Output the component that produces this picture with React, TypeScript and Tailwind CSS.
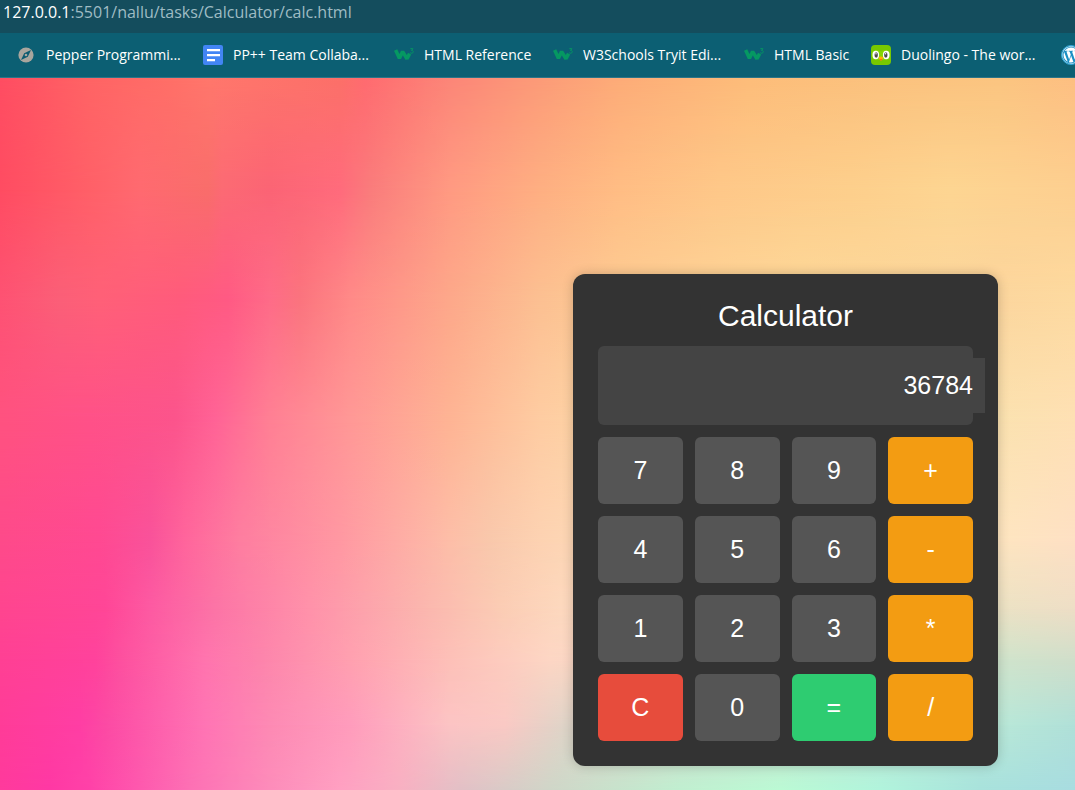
import { useState } from "react";
import type { ReactNode } from "react";
import { FaWordpress } from "react-icons/fa";

type Stop = [color: string, x: number];

// Each band holds the backdrop's colours at one height; x runs from 0 to 1075, y from 0 to 712.
const BANDS: { y: number; stops: Stop[] }[] = [
  { y: 0, stops: [["#ff4d62", 0], ["#ff6465", 90], ["#ff7068", 175], ["#ff776c", 210], ["#fc7069", 340], ["#ff6b70", 365], ["#fc8678", 450], ["#fc9b78", 540], ["#fdac78", 620], ["#fdbd7a", 750], ["#fbc27e", 880], ["#fbc580", 1000], ["#fdbf82", 1075]] },
  { y: 112, stops: [["#ff4c62", 0], ["#ff6068", 90], ["#ff6a70", 140], ["#f96d6b", 208], ["#fc6a74", 222], ["#fb6475", 270], ["#ff6b7c", 340], ["#fa7c7c", 370], ["#ff9a82", 450], ["#feaf82", 540], ["#ffbd84", 620], ["#fec889", 720], ["#fdcf8c", 850], ["#fdd592", 950], ["#fdcf90", 1075]] },
  { y: 222, stops: [["#fe5273", 0], ["#fb5f78", 60], ["#ff6078", 100], ["#ff5b7c", 180], ["#ff5a84", 228], ["#fe6c88", 270], ["#fb747e", 300], ["#ff8a88", 350], ["#fda88a", 450], ["#fcc092", 540], ["#fdcd94", 620], ["#fdd99a", 800], ["#fcd69e", 1000], ["#fddaa0", 1075]] },
  { y: 342, stops: [["#ff5280", 0], ["#ff5188", 90], ["#fc548c", 175], ["#ff6396", 215], ["#ff8094", 270], ["#ff9896", 350], ["#feb494", 450], ["#fecca2", 540], ["#fdd8a6", 620], ["#fbe2b0", 1000], ["#fee0b4", 1075]] },
  { y: 462, stops: [["#fe4a8a", 0], ["#ff4992", 100], ["#f9529a", 150], ["#ff659c", 185], ["#fe7ea0", 240], ["#ff98a2", 340], ["#fdbea8", 450], ["#f9c8ac", 490], ["#fdd2b2", 540], ["#fddcb8", 620], ["#fee5c0", 1000], ["#fee0c4", 1075]] },
  { y: 530, stops: [["#ff458f", 0], ["#ff4697", 105], ["#fd5aa2", 150], ["#fc74a6", 215], ["#ff92aa", 310], ["#fbb5ae", 420], ["#fbccb4", 500], ["#fdd8be", 560], ["#ece2c4", 1000], ["#eedec6", 1075]] },
  { y: 582, stops: [["#ff4094", 0], ["#ff429c", 95], ["#fd509f", 120], ["#ff74ae", 205], ["#fd84ac", 260], ["#ffa0b0", 350], ["#fdc0b8", 450], ["#fdd6c4", 550], ["#d0e4cc", 1000], ["#d0deca", 1075]] },
  { y: 647, stops: [["#ff3c98", 0], ["#ff3ea4", 80], ["#fc4aa4", 105], ["#ff74b4", 205], ["#fd8ab4", 270], ["#ff9cbc", 350], ["#fcc4c4", 450], ["#fac9c4", 505], ["#dfd4c8", 565], ["#b9e8d8", 1000], ["#b0e0d8", 1075]] },
  { y: 712, stops: [["#ff3a9c", 0], ["#ff38a4", 50], ["#ff42a8", 90], ["#fd70b4", 190], ["#fd8cba", 270], ["#ffa0c2", 340], ["#f8b0c2", 400], ["#e2c0c6", 460], ["#cfd6c8", 550], ["#c0efd0", 680], ["#bafad4", 780], ["#b0f4dc", 880], ["#a8e2dc", 980], ["#a8dce0", 1075]] },
];

const pct = (value: number, total: number) => `${((value / total) * 100).toFixed(2)}%`;

function Backdrop() {
  return (
    <div aria-hidden="true" className="absolute inset-0">
      {BANDS.map((band, i) => {
        const colors = band.stops.map(([color, x]) => `${color} ${pct(x, 1075)}`).join(", ");
        const mask =
          i === 0
            ? undefined
            : `linear-gradient(to bottom, transparent ${pct(BANDS[i - 1].y, 712)}, black ${pct(band.y, 712)})`;
        return (
          <div
            key={band.y}
            className="absolute inset-0"
            style={{ backgroundImage: `linear-gradient(to right, ${colors})`, maskImage: mask }}
          />
        );
      })}
    </div>
  );
}

function CompassIcon() {
  return (
    <svg viewBox="0 0 20 20" className="size-5">
      <circle cx="10" cy="10" r="7.6" fill="#a9a59d" />
      <path d="M15 5 L11.8 11.8 L5 15 L8.2 8.2 Z" fill="#0b5a70" />
      <circle cx="10" cy="10" r="1.3" fill="#a9a59d" />
    </svg>
  );
}

function DocsIcon() {
  return (
    <svg viewBox="0 0 20 20" className="size-5">
      <rect width="20" height="20" rx="2" fill="#4285f4" />
      <path d="M4 4h13v2.3H4zM4 9h13v2.3H4zM4 14h8v2.3H4z" fill="#fff" />
    </svg>
  );
}

function SchoolsIcon() {
  return (
    <svg viewBox="0 0 20 20" className="size-5">
      <path
        d="M1.6 5 L5.4 13.2 L8.6 6.6 L13 13.8 L15.6 8.6"
        fill="none"
        stroke="#059862"
        strokeWidth="3.6"
        strokeLinejoin="bevel"
      />
      <path
        d="M16.4 3.7h2.5L17.5 5.4c1.200 0 1.700.6 1.700 1.300 0 .9-.7 1.500-1.600 1.500-.6 0-1-.2-1.400-.6"
        fill="none"
        stroke="#059862"
        strokeWidth="1"
      />
    </svg>
  );
}

function OwlIcon() {
  return (
    <svg viewBox="0 0 20 20" className="size-5">
      <rect width="20" height="20" rx="4" fill="#78c800" />
      <path d="M1 7.5C2 4.5 7 4 10 6.5 13 4 18 4.5 19 7.5V12c-1 3.5-6.5 4-9 1.5C7.5 16 2 15.5 1 12z" fill="#84d600" />
      <ellipse cx="4.8" cy="10" rx="3.3" ry="4.2" fill="#fff" />
      <ellipse cx="15.2" cy="10" rx="3.3" ry="4.2" fill="#fff" />
      <ellipse cx="5.2" cy="10" rx="1.7" ry="2.7" fill="#4b4b4b" />
      <ellipse cx="14.8" cy="10" rx="1.7" ry="2.7" fill="#4b4b4b" />
      <circle cx="5" cy="8.8" r="0.7" fill="#fff" />
      <circle cx="14.6" cy="8.8" r="0.7" fill="#fff" />
      <path d="M7.7 12.2c1-1 3.6-1 4.6 0-.3 1.8-1.4 3.2-2.3 3.2s-2-1.4-2.3-3.2z" fill="#ffb100" />
      <path d="M8.5 13.9h3c-.3 1-.9 1.5-1.5 1.5s-1.2-.5-1.5-1.5z" fill="#f47c00" />
    </svg>
  );
}

function PressIcon() {
  return (
    <span className="flex size-5 items-center justify-center rounded-full border border-[#35a8d8] bg-[#1b8fc4] text-white">
      <FaWordpress className="size-[18px]" />
    </span>
  );
}

function Bookmark({ icon, label, width }: { icon: ReactNode; label: string; width: string }) {
  return (
    <a href="#" className={`flex shrink-0 items-center gap-[10px] whitespace-nowrap ${width}`}>
      <span className="shrink-0">{icon}</span>
      {label}
    </a>
  );
}

function BrowserBars() {
  return (
    <header className="font-['Segoe_UI','Open_Sans',sans-serif]">
      <div className="h-[33px] bg-[#144d5d] pl-[3px] text-base text-[#9fbcc4]">
        <span className="text-white">127.0.0.1</span>:5501/nallu/tasks/Calculator/calc.html
      </div>
      <nav
        aria-label="Bookmarks"
        className="flex h-[45px] items-center gap-5 overflow-hidden border-b border-[#2d7488] bg-[#0c5f73] pl-4 text-sm text-white"
      >
        <Bookmark icon={<CompassIcon />} label="Pepper Programmi..." width="w-[167px]" />
        <Bookmark icon={<DocsIcon />} label="PP++ Team Collaba..." width="w-[171px]" />
        <Bookmark icon={<SchoolsIcon />} label="HTML Reference" width="w-[139px]" />
        <Bookmark icon={<SchoolsIcon />} label="W3Schools Tryit Edi..." width="w-[171px]" />
        <Bookmark icon={<SchoolsIcon />} label="HTML Basic" width="w-[107px]" />
        <Bookmark icon={<OwlIcon />} label="Duolingo - The wor..." width="w-[170px]" />
        <a href="#" aria-label="WordPress" className="shrink-0">
          <PressIcon />
        </a>
      </nav>
    </header>
  );
}

const KEYS = ["7", "8", "9", "+", "4", "5", "6", "-", "1", "2", "3", "*", "C", "0", "=", "/"];

function keyColor(key: string) {
  if (key === "C") return "bg-[#e74c3c]";
  if (key === "=") return "bg-[#2ecc71]";
  if ("+-*/".includes(key)) return "bg-[#f39c12]";
  return "bg-[#555555]";
}

function evaluate(expression: string) {
  const tokens = expression.match(/\d+(\.\d+)?|[-+*/]/g) ?? [];
  const terms: number[] = [];
  let operator = "+";
  for (const token of tokens) {
    if ("+-*/".includes(token)) {
      operator = token;
      continue;
    }
    const value = Number(token);
    if (operator === "*") terms.push((terms.pop() ?? 0) * value);
    else if (operator === "/") terms.push((terms.pop() ?? 0) / value);
    else terms.push(operator === "-" ? -value : value);
  }
  return String(terms.reduce((sum, term) => sum + term, 0));
}

function Calculator() {
  const [entry, setEntry] = useState("36784");

  const press = (key: string) => {
    if (key === "C") setEntry("");
    else if (key === "=") setEntry(evaluate(entry));
    else setEntry(entry + key);
  };

  return (
    <section className="relative w-[425px] rounded-xl bg-[#333333] p-[25px] font-['Liberation_Sans',Arial,sans-serif] text-white shadow-[0_0_12px_rgba(0,0,0,0.2)]">
      <h1 className="mb-[14px] text-center text-[30px] leading-[33px]">Calculator</h1>
      <div className="mb-3 rounded-md bg-[#444444] p-3">
        <input
          aria-label="Result"
          readOnly
          value={entry}
          className="box-content block h-[31px] w-full bg-[#444444] p-3 text-right text-[25px] leading-[31px] outline-none"
        />
      </div>
      <div className="grid grid-cols-4 gap-3">
        {KEYS.map((key) => (
          <button
            key={key}
            type="button"
            onClick={() => press(key)}
            className={`h-[67px] rounded-md pb-0.5 text-[25px] leading-7 ${keyColor(key)}`}
          >
            {key}
          </button>
        ))}
      </div>
    </section>
  );
}

export default function App() {
  return (
    <div className="flex min-h-screen flex-col">
      <BrowserBars />
      <main className="relative flex grow items-end justify-end pr-[77px] pb-6">
        <Backdrop />
        <Calculator />
      </main>
    </div>
  );
}
